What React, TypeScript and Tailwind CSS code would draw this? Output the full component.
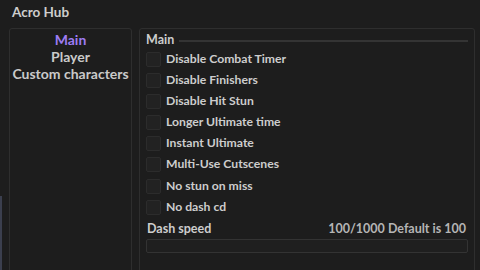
import { useState } from "react";

const options = [
  "Disable Combat Timer",
  "Disable Finishers",
  "Disable Hit Stun",
  "Longer Ultimate time",
  "Instant Ultimate",
  "Multi-Use Cutscenes",
  "No stun on miss",
  "No dash cd",
];

const tabs = ["Main", "Player", "Custom characters"];

export default function App() {
  const [tab, setTab] = useState("Main");
  const [checked, setChecked] = useState<Record<string, boolean>>({});

  return (
    <div
      className="relative h-[270px] w-[480px] overflow-hidden bg-[#1d1d1d] text-[#cdcdcd]"
      style={{ fontFamily: 'Lato, "Noto Sans", sans-serif' }}
    >
      <div className="absolute bottom-0 left-0 top-[196px] w-[2px] bg-[#3b3f4e]" />
      <div className="h-[28px] pl-[12px] pt-[3px] text-[13.5px] font-bold leading-[18px]">Acro Hub</div>
      <div className="flex gap-[7px] pl-[9px]">
        <div className="h-[260px] w-[123px] whitespace-nowrap rounded-[3px] border border-[#2e2e2e] pt-[2px] text-center text-[14px] font-bold leading-[17px]">
          {tabs.map((t) => (
            <div
              key={t}
              onClick={() => setTab(t)}
              className={t === tab ? "cursor-pointer text-[#9d7cf4]" : "cursor-pointer text-[#cacaca]"}
            >
              {t}
            </div>
          ))}
        </div>
        <div className="h-[260px] w-[336px] rounded-[3px] border border-[#2e2e2e] px-[6px] pt-[3px]">
          <div className="flex items-center gap-[5px] text-[12.5px] font-bold leading-[16px]">
            <span>Main</span>
            <div className="mt-[2px] h-[2px] flex-1 bg-[#343434]" />
          </div>
          <div className="mt-[4px]">
            {options.map((o) => (
              <label key={o} className="flex h-[21.1px] cursor-pointer items-start gap-[5px]">
                <input
                  type="checkbox"
                  className="hidden"
                  checked={!!checked[o]}
                  onChange={() => setChecked((c) => ({ ...c, [o]: !c[o] }))}
                />
                <span
                  className={
                    checked[o]
                      ? "h-[15px] w-[15px] rounded-[2px] border border-[#2c2c2c] bg-[#9d7cf4]"
                      : "h-[15px] w-[15px] rounded-[2px] border border-[#2c2c2c] bg-[#222222]"
                  }
                />
                <span className="text-[12.2px] font-bold leading-[14px]">{o}</span>
              </label>
            ))}
          </div>
          <div className="flex justify-between pl-[1px] pr-[2px] text-[12.5px] font-bold leading-[16px]">
            <span>Dash speed</span>
            <span className="text-[#b5b5b5]">100/1000 Default is 100</span>
          </div>
          <div className="mt-[2px] h-[14px] rounded-[2px] border border-[#333333] bg-[#1f1f1f]" />
        </div>
      </div>
    </div>
  );
}
